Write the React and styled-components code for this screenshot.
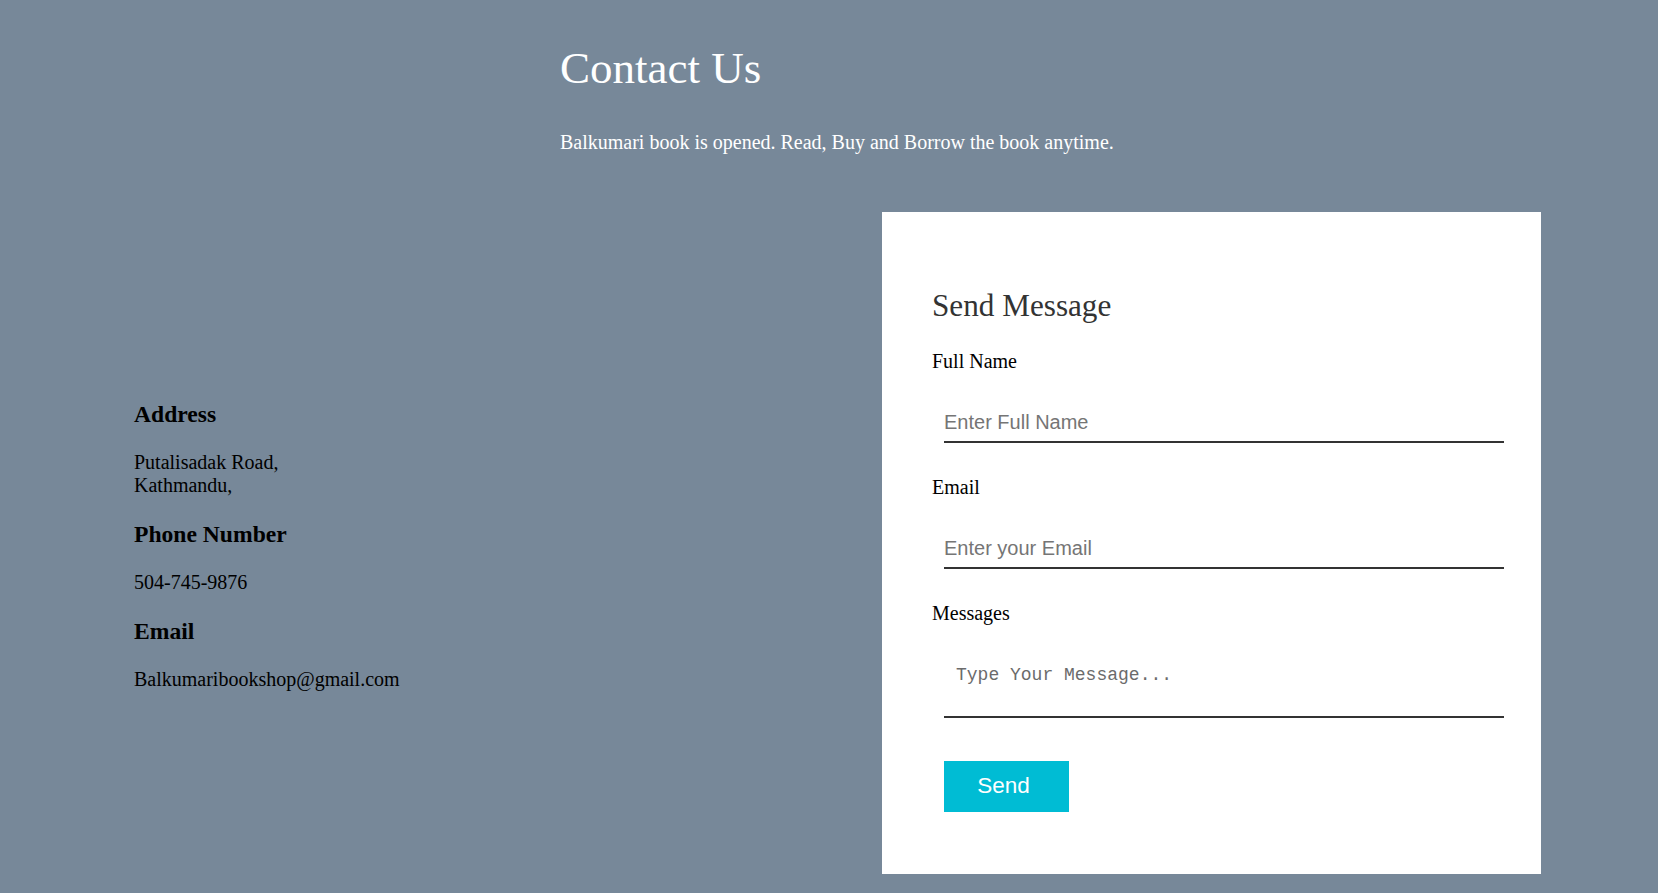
import React from 'react'
import styled, { createGlobalStyle } from 'styled-components'

const GlobalStyle = createGlobalStyle`
  *{
    box-sizing:border-box;
  }
  body{
    margin:0;
    background-color:#778899;
    font-family:"Liberation Serif","Times New Roman",serif;
  }
`

const info = [
  { title: 'Address', lines: ['Putalisadak Road,', 'Kathmandu,'] },
  { title: 'Phone Number', lines: ['504-745-9876'] },
  { title: 'Email', lines: ['Balkumaribookshop@gmail.com'] },
]

const fields = [
  { label: 'Full Name', placeholder: 'Enter Full Name', type: 'text' },
  { label: 'Email', placeholder: 'Enter your Email', type: 'email' },
]

const App = () => {
  return (
    <Page>
      <GlobalStyle />
      <Header>
        <h1>Contact Us</h1>
        <p>Balkumari book is opened. Read, Buy and Borrow the book anytime.</p>
      </Header>
      <Main>
        <Info>
          {info.map((item, i) => (
            <div key={i}>
              <h3>{item.title}</h3>
              <p>
                {item.lines.map((line, j) => (
                  <React.Fragment key={j}>
                    {line}
                    {j < item.lines.length - 1 && <br />}
                  </React.Fragment>
                ))}
              </p>
            </div>
          ))}
        </Info>
        <Card>
          <h2>Send Message</h2>
          {fields.map((f, i) => (
            <Field key={i} gap={i === 0 ? 26 : 33.5}>
              <label>{f.label}</label>
              <Input type={f.type} placeholder={f.placeholder} />
            </Field>
          ))}
          <Field gap={32.5}>
            <label>Messages</label>
            <TextArea placeholder="Type Your Message..." />
          </Field>
          <SendButton>Send</SendButton>
        </Card>
      </Main>
    </Page>
  )
}

export default App

const Page = styled.div`
  min-height:893px;
  overflow:hidden;
`

const Header = styled.div`
  padding-left:560px;
  color:#fff;
  h1{
    margin:42px 0 0;
    font-size:45px;
    line-height:52px;
    font-weight:400;
  }
  p{
    margin:37px 0 0;
    font-size:20px;
    line-height:23px;
  }
`

const Main = styled.div`
  display:flex;
  align-items:center;
  justify-content:space-between;
  padding:58px 117px 0 134px;
`

const Info = styled.div`
  margin-top:3px;
  color:#000;
  h3{
    margin:23.4px 0;
    font-size:23.6px;
    line-height:27px;
    font-weight:700;
  }
  p{
    margin:19.6px 0;
    font-size:20px;
    line-height:23.25px;
  }
`

const Card = styled.div`
  width:659px;
  background-color:#fff;
  padding:77px 50px 62px;
  h2{
    margin:0;
    font-size:31.2px;
    line-height:34.5px;
    font-weight:400;
    color:#333;
  }
`

const Field = styled.div`
  display:flex;
  flex-direction:column;
  align-items:flex-start;
  margin-top:${p => p.gap}px;
  label{
    font-size:20px;
    line-height:23px;
    color:#000;
  }
`

const Input = styled.input`
  margin:29px 0 0 12px;
  width:560px;
  padding:9px 0 7px;
  border:none;
  border-bottom:2px solid #333;
  outline:none;
  font-family:"Liberation Sans",Arial,sans-serif;
  font-size:20px;
  line-height:23px;
  background:transparent;
  &::placeholder{
    color:#757575;
  }
`

const TextArea = styled.textarea`
  margin:29px 0 0 12px;
  width:560px;
  height:64px;
  padding:11px 12px;
  border:none;
  border-bottom:2px solid #333;
  outline:none;
  resize:none;
  font-family:"Liberation Mono","Courier New",monospace;
  font-size:18px;
  line-height:21px;
  &::placeholder{
    color:#6b6b6b;
  }
`

const SendButton = styled.button`
  display:block;
  margin:43px 0 0 12px;
  width:125px;
  height:51px;
  padding:0 6px 0 0;
  border:none;
  background-color:#00bcd4;
  color:#fff;
  font-family:"Liberation Sans",Arial,sans-serif;
  font-size:22.5px;
  cursor:pointer;
`
